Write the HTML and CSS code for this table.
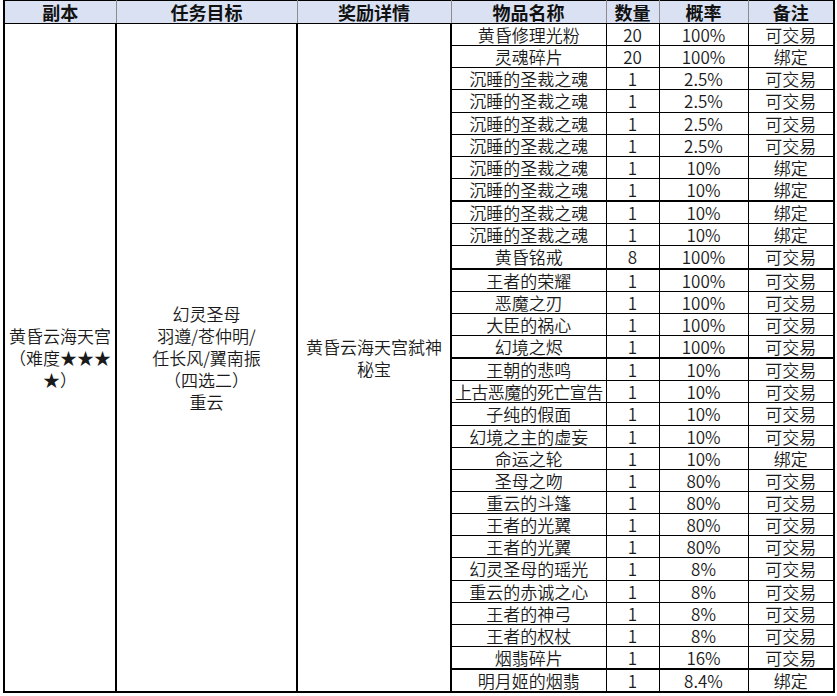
FILE: index.html
```html
<!DOCTYPE html>
<html lang="zh">
<head>
<meta charset="utf-8">
<title>黄昏云海天宫</title>
<link rel="stylesheet" href="styles.css">
</head>
<body>
<table class="loot">
<colgroup>
<col class="c1"><col class="c2"><col class="c3"><col class="c4"><col class="c5"><col class="c6"><col class="c7">
</colgroup>
<thead>
<tr class="head"><th>副本</th><th>任务目标</th><th>奖励详情</th><th>物品名称</th><th>数量</th><th>概率</th><th>备注</th></tr>
</thead>
<tbody>
<tr><td rowspan="30" class="big">黄昏云海天宫<br>（难度★★★<br>★）</td><td rowspan="30" class="big">幻灵圣母<br>羽遵/苍仲明/<br>任长风/翼南振<br>（四选二）<br>重云</td><td rowspan="30" class="big">黄昏云海天宫弑神<br>秘宝</td><td>黄昏修理光粉</td><td>20</td><td>100%</td><td>可交易</td></tr>
<tr><td>灵魂碎片</td><td>20</td><td>100%</td><td>绑定</td></tr>
<tr><td>沉睡的圣裁之魂</td><td>1</td><td>2.5%</td><td>可交易</td></tr>
<tr><td>沉睡的圣裁之魂</td><td>1</td><td>2.5%</td><td>可交易</td></tr>
<tr><td>沉睡的圣裁之魂</td><td>1</td><td>2.5%</td><td>可交易</td></tr>
<tr><td>沉睡的圣裁之魂</td><td>1</td><td>2.5%</td><td>可交易</td></tr>
<tr><td>沉睡的圣裁之魂</td><td>1</td><td>10%</td><td>绑定</td></tr>
<tr class="tk"><td>沉睡的圣裁之魂</td><td>1</td><td>10%</td><td>绑定</td></tr>
<tr><td>沉睡的圣裁之魂</td><td>1</td><td>10%</td><td>绑定</td></tr>
<tr><td>沉睡的圣裁之魂</td><td>1</td><td>10%</td><td>绑定</td></tr>
<tr class="tk"><td>黄昏铭戒</td><td>8</td><td>100%</td><td>可交易</td></tr>
<tr><td>王者的荣耀</td><td>1</td><td>100%</td><td>可交易</td></tr>
<tr><td>恶魔之刃</td><td>1</td><td>100%</td><td>可交易</td></tr>
<tr><td>大臣的祸心</td><td>1</td><td>100%</td><td>可交易</td></tr>
<tr class="tk"><td>幻境之烬</td><td>1</td><td>100%</td><td>可交易</td></tr>
<tr><td>王朝的悲鸣</td><td>1</td><td>10%</td><td>可交易</td></tr>
<tr><td class="tight">上古恶魔的死亡宣告</td><td>1</td><td>10%</td><td>可交易</td></tr>
<tr><td>子纯的假面</td><td>1</td><td>10%</td><td>可交易</td></tr>
<tr><td>幻境之主的虚妄</td><td>1</td><td>10%</td><td>可交易</td></tr>
<tr><td>命运之轮</td><td>1</td><td>10%</td><td>绑定</td></tr>
<tr><td>圣母之吻</td><td>1</td><td>80%</td><td>可交易</td></tr>
<tr><td>重云的斗篷</td><td>1</td><td>80%</td><td>可交易</td></tr>
<tr><td>王者的光翼</td><td>1</td><td>80%</td><td>可交易</td></tr>
<tr><td>王者的光翼</td><td>1</td><td>80%</td><td>可交易</td></tr>
<tr><td>幻灵圣母的瑶光</td><td>1</td><td>8%</td><td>可交易</td></tr>
<tr><td>重云的赤诚之心</td><td>1</td><td>8%</td><td>可交易</td></tr>
<tr><td>王者的神弓</td><td>1</td><td>8%</td><td>可交易</td></tr>
<tr><td>王者的权杖</td><td>1</td><td>8%</td><td>可交易</td></tr>
<tr class="tk"><td>烟翡碎片</td><td>1</td><td>16%</td><td>可交易</td></tr>
<tr><td>明月姬的烟翡</td><td>1</td><td>8.4%</td><td>绑定</td></tr>
</tbody>
</table>
</body>
</html>
```
FILE: styles.css
```css
html, body {
  margin: 0;
  padding: 0;
  background: #ffffff;
}
body {
  padding: 0 0 0 3px;
  font-family: "Noto Sans CJK SC", "Noto Sans", sans-serif;
  color: #1a1a1a;
}
.loot {
  border-collapse: collapse;
  table-layout: fixed;
  width: 830px;
  border: 2px solid #000;
  border-top: 1px solid #000;
}
.c1 { width: 112px; }
.c2 { width: 181px; }
.c3 { width: 154px; }
.c4 { width: 155px; }
.c5 { width: 53px; }
.c6 { width: 89px; }
.c7 { width: 86px; }
.loot th {
  background: #d9e1f2;
  font-size: 18px;
  font-weight: 700;
  line-height: 22px;
  height: 22px;
  padding: 0;
  text-align: center;
  color: #111;
  border-left: 1px solid #8c8c8c;
  border-right: 1px solid #8c8c8c;
  border-bottom: 1px solid #000;
}
.loot td {
  font-size: 17px;
  font-weight: 350;
  line-height: 21px;
  height: 21.15px;
  padding: 0;
  text-align: center;
  white-space: nowrap;
  overflow: hidden;
  border: 1px solid #000;
}
.loot td.big {
  white-space: normal;
  line-height: 22px;
  vertical-align: middle;
  border-width: 0 2px 0 1px;
}
.loot tr.tk td {
  border-bottom-width: 2px;
}
.loot td.tight {
  letter-spacing: -0.6px;
}
```
